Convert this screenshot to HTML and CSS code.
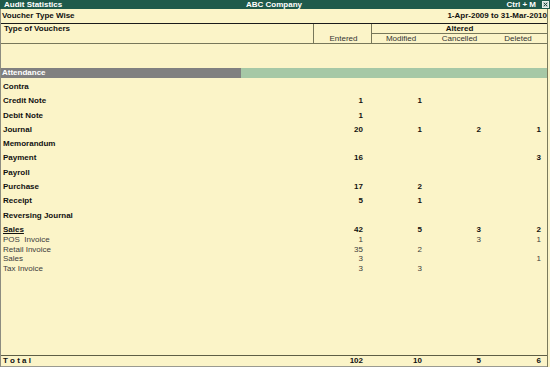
FILE: index.html
```html
<!DOCTYPE html>
<html lang="en">
<head>
    <meta charset="UTF-8">
    <meta name="viewport" content="width=device-width, initial-scale=1.0">
    <title>Audit Statistics</title>
    <link rel="stylesheet" href="styles.css">
</head>
<body>
    <div class="screen">
        <div class="titlebar">
            <span class="title-left">Audit Statistics</span>
            <span class="title-center">ABC Company</span>
            <span class="title-right">Ctrl + M
                <svg class="close-box" width="7" height="7" viewBox="0 0 7 7">
                    <rect x="0.5" y="0.5" width="6" height="6" fill="#c8d4d0" stroke="#e8efec"/>
                    <path d="M1.8 1.8 L5.2 5.2 M5.2 1.8 L1.8 5.2" stroke="#1d4a3e" stroke-width="1"/>
                </svg>
            </span>
        </div>

        <div class="sheet">
            <div class="period">
                <span>Voucher Type Wise</span>
                <span>1-Apr-2009 to 31-Mar-2010</span>
            </div>

            <div class="colhead">
                <div class="ch-name">Type of Vouchers</div>
                <div class="ch-entered">Entered</div>
                <div class="ch-altered">
                    <div class="ch-altered-title">Altered</div>
                    <div class="ch-subs">
                        <span>Modified</span>
                        <span>Cancelled</span>
                        <span>Deleted</span>
                    </div>
                </div>
            </div>

            <div class="content">
                <div class="group-bar"><span class="group-name">Attendance</span><span class="group-fill"></span></div>

                <div class="rows">
                    <div class="row"><span class="name">Contra</span><span></span><span></span><span></span><span></span></div>
                    <div class="row"><span class="name">Credit Note</span><span>1</span><span>1</span><span></span><span></span></div>
                    <div class="row"><span class="name">Debit Note</span><span>1</span><span></span><span></span><span></span></div>
                    <div class="row"><span class="name">Journal</span><span>20</span><span>1</span><span>2</span><span>1</span></div>
                    <div class="row"><span class="name">Memorandum</span><span></span><span></span><span></span><span></span></div>
                    <div class="row"><span class="name">Payment</span><span>16</span><span></span><span></span><span>3</span></div>
                    <div class="row"><span class="name">Payroll</span><span></span><span></span><span></span><span></span></div>
                    <div class="row"><span class="name">Purchase</span><span>17</span><span>2</span><span></span><span></span></div>
                    <div class="row"><span class="name">Receipt</span><span>5</span><span>1</span><span></span><span></span></div>
                    <div class="row"><span class="name">Reversing Journal</span><span></span><span></span><span></span><span></span></div>
                    <div class="row row-open"><span class="name"><u>Sales</u></span><span>42</span><span>5</span><span>3</span><span>2</span></div>
                    <div class="row row-sub"><span class="name">POS&nbsp; Invoice</span><span>1</span><span></span><span>3</span><span>1</span></div>
                    <div class="row row-sub"><span class="name">Retail Invoice</span><span>35</span><span>2</span><span></span><span></span></div>
                    <div class="row row-sub"><span class="name">Sales</span><span>3</span><span></span><span></span><span>1</span></div>
                    <div class="row row-sub"><span class="name">Tax Invoice</span><span>3</span><span>3</span><span></span><span></span></div>
                </div>
            </div>

            <div class="row row-total"><span class="name">T o t a l</span><span>102</span><span>10</span><span>5</span><span>6</span></div>
        </div>
    </div>
</body>
</html>
```

FILE: styles.css
```css
body {
    margin: 0;
    font-family: "Liberation Sans", Arial, sans-serif;
    font-size: 8px;
    color: #111;
    background-color: #fbf4c8;
}
.screen {
    width: 550px;
    height: 367px;
    display: flex;
    flex-direction: column;
    overflow: hidden;
}
.titlebar {
    height: 9px;
    line-height: 9px;
    background-color: #1f5a4b;
    color: #fff;
    font-weight: bold;
    display: grid;
    grid-template-columns: 1fr auto 1fr;
    padding: 0 1px 0 4px;
}
.title-center {
    padding-right: 5px;
}
.title-right {
    display: flex;
    justify-content: flex-end;
    align-items: center;
    gap: 6px;
}
.close-box {
    display: block;
}
.sheet {
    flex: 1;
    display: flex;
    flex-direction: column;
    margin-right: 2px;
    border-left: 1px solid #8c8c80;
    border-right: 1px solid #7a7a5c;
}
.period {
    height: 14px;
    line-height: 14px;
    display: flex;
    justify-content: space-between;
    font-weight: bold;
    padding: 0 0 0 1px;
    border-bottom: 1px solid #1a1a1a;
}
.colhead {
    display: grid;
    grid-template-columns: 312px 58px 176px;
    height: 19px;
    border-bottom: 1px solid #77775a;
}
.ch-name {
    font-weight: bold;
    line-height: 10px;
    padding-left: 3px;
}
.ch-entered {
    border-left: 1px solid #77775a;
    display: flex;
    align-items: flex-end;
    justify-content: center;
    line-height: 9px;
    color: #333;
    padding-left: 2px;
}
.ch-altered {
    border-left: 1px solid #77775a;
    display: flex;
    flex-direction: column;
}
.ch-altered-title {
    height: 9px;
    line-height: 10px;
    text-align: center;
    font-weight: bold;
    border-bottom: 1px solid #77775a;
}
.ch-subs {
    display: grid;
    grid-template-columns: 58px 59px 58px;
    line-height: 9px;
    color: #333;
    text-align: center;
}
.content {
    flex: 1;
}
.group-bar {
    display: flex;
    height: 10px;
    line-height: 10px;
    margin-top: 24px;
    color: #fff;
    font-weight: bold;
}
.group-name {
    width: 239px;
    padding-left: 1px;
    background-color: #808080;
}
.group-fill {
    flex: 1;
    background-color: #a6c8a6;
}
.rows {
    margin-top: 2px;
}
.row {
    display: grid;
    grid-template-columns: 312px 58px 59px 59px 58px;
    height: 14.3px;
    line-height: 14.3px;
    font-weight: bold;
}
.row span {
    text-align: right;
    padding-right: 8px;
}
.row span:last-child {
    padding-right: 6px;
}
.row .name {
    text-align: left;
    padding-left: 2px;
    padding-right: 0;
}
.row-open {
    height: 12.5px;
    line-height: 13px;
}
.row-open u {
    text-underline-offset: 1px;
}
.row-sub {
    height: 9.5px;
    line-height: 9.5px;
    font-weight: normal;
    color: #3c3c3c;
}
.row-total {
    height: 10px;
    line-height: 10px;
    border-top: 1px solid #5e5e45;
    border-bottom: 1px solid #9a9a90;
}
```
